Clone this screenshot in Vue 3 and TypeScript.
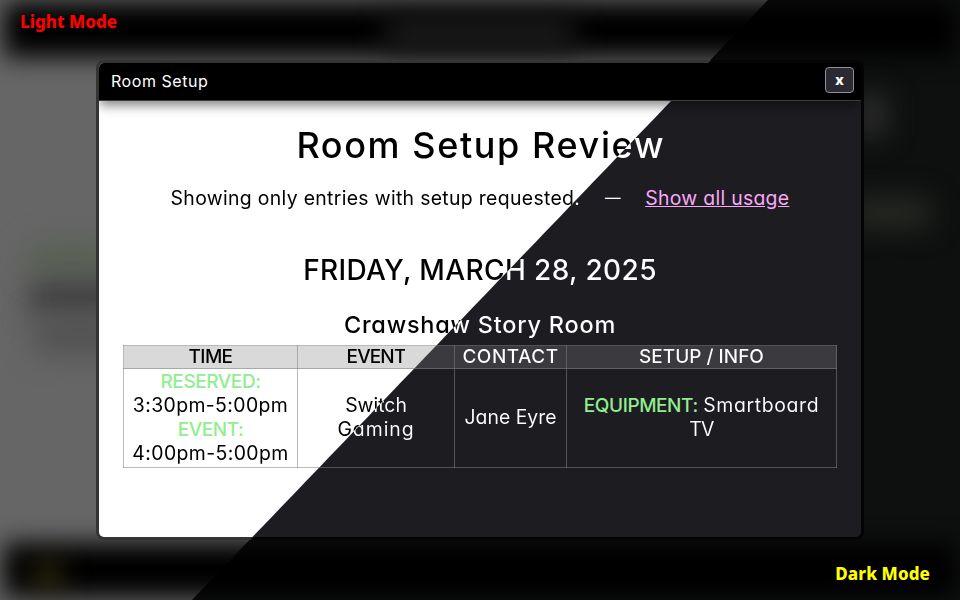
<script setup lang="ts">
interface Column { key: string; label: string }

const columns: Column[] = [
  { key: 'time', label: 'TIME' },
  { key: 'event', label: 'EVENT' },
  { key: 'contact', label: 'CONTACT' },
  { key: 'setup', label: 'SETUP / INFO' },
]
</script>

<template>
  <main class="stage">
    <div class="scene light">
      <i class="bar top"></i><i class="bar bottom"></i><i class="title"></i><i class="green"></i>
      <i class="smudge"></i><i class="haze"></i><i class="gold"></i>
    </div>
    <div class="scene dark">
      <i class="bar top"></i><i class="bar bottom"></i><i class="glow one"></i><i class="glow two"></i>
    </div>
    <strong class="mode mode-light">Light Mode</strong>
    <section class="dialog">
      <div class="panel">
        <header class="head">
          <span class="caption">Room Setup</span>
          <button class="close" type="button">x</button>
        </header>
        <div class="body">
          <h1><span class="split">Room Setup Review</span></h1>
          <p class="intro">
            <span class="split showing">Showing only entries with setup requested.</span>
            <span class="dash">—</span>
            <a class="link">Show all usage</a>
          </p>
          <h2><span class="split">FRIDAY, MARCH 28, 2025</span></h2>
          <h3><span class="split">Crawshaw Story Room</span></h3>
          <table>
            <colgroup><col v-for="c in columns" :key="c.key" :class="c.key" /></colgroup>
            <thead>
              <tr>
                <th v-for="c in columns" :key="c.key"><span class="split" :class="'label-' + c.key">{{ c.label }}</span></th>
              </tr>
            </thead>
            <tbody>
              <tr>
                <td>
                  <b>RESERVED:</b><br /><span class="split hours">3:30pm-5:00pm</span><br />
                  <b>EVENT:</b><br /><span class="split hours">4:00pm-5:00pm</span>
                </td>
                <td><span class="split">Switch</span><br /><span class="split wide">Gaming</span></td>
                <td><span class="split">Jane Eyre</span></td>
                <td><b>EQUIPMENT:</b> <span class="split item">Smartboard</span><br /><span class="split tight">TV</span></td>
              </tr>
            </tbody>
          </table>
        </div>
      </div>
    </section>
    <strong class="mode mode-dark">Dark Mode</strong>
  </main>
</template>

<style>
body { margin: 0; overflow: hidden; background: #000; }
</style>

<style scoped>
.stage { position: relative; width: 960px; height: 600px; overflow: hidden; display: grid; place-items: center; font-family: Inter, 'Noto Sans', sans-serif; font-feature-settings: 'cv11' 1; }
.scene { position: absolute; inset: 0; overflow: hidden; }
.scene i { position: absolute; display: block; filter: blur(14px); }
.light { background: #666; }
.dark { background: #0e100f; clip-path: polygon(80% 0, 100% 0, 100% 100%, 20% 100%); }
.scene .bar { left: 4px; right: 4px; background: #000; filter: blur(12px); }
.bar.top { top: 2px; height: 55px; }
.bar.bottom { top: 543px; height: 54px; }
.title { left: 385px; top: 16px; width: 190px; height: 36px; background: #1a1a1a; }
.green { left: 28px; top: 245px; width: 90px; height: 28px; background: #576051; }
.smudge { left: 30px; top: 284px; width: 100px; height: 28px; background: #383838; }
.haze { left: 34px; top: 316px; width: 90px; height: 38px; background: #525252; }
.gold { left: 36px; top: 565px; width: 24px; height: 20px; background: #4a4212; }
.glow.one { left: 856px; top: 94px; width: 30px; height: 42px; background: #2e2e2e; }
.glow.two { left: 850px; top: 198px; width: 80px; height: 30px; background: #282a25; }
.mode { position: absolute; font: 800 17px/24px 'Noto Sans', sans-serif; }
.mode-light { left: 20px; top: 10px; color: #f00; }
.mode-dark { right: 30px; bottom: 14px; color: #ff0; letter-spacing: .08px; }

.dialog { position: relative; box-sizing: border-box; width: 768px; height: 480px; padding: 3px; border-radius: 8px; background: linear-gradient(133.83deg, #343434 50%, #040405 calc(50% + 1px)) fixed; }
.panel { height: 100%; overflow: hidden; border-radius: 5px; background: linear-gradient(133.83deg, #fff calc(50% - .5px), #1d1c21 calc(50% + .5px)) fixed; }
.head { position: relative; box-sizing: border-box; height: 38px; padding: 0 7px 0 12px; display: flex; align-items: center; justify-content: space-between; background: #000; border-bottom: 1px solid #3c3c3c; box-shadow: 0 6px 10px -1px rgba(0, 0, 0, .45); color: #fff; }
.caption { margin-bottom: 2px; font-size: 16px; letter-spacing: .55px; }
.close { box-sizing: border-box; width: 29px; height: 26px; margin-bottom: 3px; padding: 0 0 2px; border: 1px solid #8f8f9d; border-radius: 4px; background: #2b2a33; color: #fff; font: 800 14px 'Noto Sans', sans-serif; }
.body { padding: 0 24px; text-align: center; font-size: 19.4px; line-height: 24px; }
.split { color: transparent; background: linear-gradient(133.83deg, #000 calc(50% - .5px), #fff calc(50% + .5px)) fixed; -webkit-background-clip: text; background-clip: text; }

h1, h2, h3, p { margin: 0; font-weight: 500; }
h1 { padding-top: 20px; font-size: 36px; line-height: 48px; letter-spacing: 1.6px; text-indent: 1.6px; font-optical-sizing: none; }
.intro { display: flex; justify-content: center; align-items: center; gap: 23.5px; padding-top: 17px; font-weight: 400; white-space: nowrap; }
.showing { letter-spacing: .33px; }
.dash { width: 18px; color: #fff; font-size: 15.5px; }
.link { color: #f9a8f9; letter-spacing: .3px; text-decoration: underline; }
h2 { padding-top: 42px; font-size: 28px; line-height: 36px; letter-spacing: .38px; }
h3 { padding-top: 22px; font-size: 23.5px; line-height: 30px; letter-spacing: .77px; }

table { width: 714px; margin-top: 5px; table-layout: fixed; border-collapse: collapse; }
.time { width: 174px; }
.event { width: 157px; }
.contact { width: 112px; }
.setup { width: 270px; }
th, td { padding: 0; border: 1px solid rgba(128, 128, 128, .55); }
th { height: 22px; font-size: 19px; line-height: 22px; font-weight: 500; background: rgba(128, 128, 128, .3); }
td { height: 96px; padding-bottom: 2px; white-space: nowrap; }
td b { color: #90ee90; font-size: 19px; line-height: 20px; font-weight: 500; letter-spacing: -.43px; }
.label-time { letter-spacing: -.6px; }
.label-event { letter-spacing: -.85px; }
.label-contact { letter-spacing: .5px; }
.hours { letter-spacing: .4px; }
.wide { letter-spacing: .95px; }
.item { letter-spacing: .65px; }
.tight { letter-spacing: -.8px; }
</style>
